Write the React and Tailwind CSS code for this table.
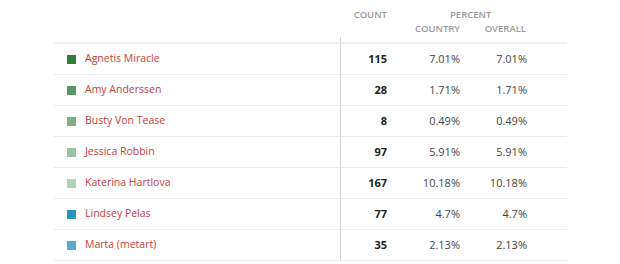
import React from "react";

const rows = [
  { name: "Agnetis Miracle", color: "bg-[#2f7d3b]", count: "115", country: "7.01%", overall: "7.01%" },
  { name: "Amy Anderssen", color: "bg-[#5b9766]", count: "28", country: "1.71%", overall: "1.71%" },
  { name: "Busty Von Tease", color: "bg-[#80b088]", count: "8", country: "0.49%", overall: "0.49%" },
  { name: "Jessica Robbin", color: "bg-[#9cc39f]", count: "97", country: "5.91%", overall: "5.91%" },
  { name: "Katerina Hartlova", color: "bg-[#b3d1b5]", count: "167", country: "10.18%", overall: "10.18%" },
  { name: "Lindsey Pelas", color: "bg-[#2a93bb]", count: "77", country: "4.7%", overall: "4.7%" },
  { name: "Marta (metart)", color: "bg-[#56acca]", count: "35", country: "2.13%", overall: "2.13%" },
];

export default function App() {
  return (
    <div className="w-[620px] h-[264px] bg-white overflow-hidden" style={{ fontFamily: '"Open Sans", sans-serif' }}>
      <div className="ml-[54px] w-[513px]">
        <div className="h-[37px] flex flex-col text-[9.5px] font-semibold text-[#9a9a9a] uppercase leading-none">
          <div className="grid grid-cols-[286px_48px_139px_40px] pt-[10px] h-[24px]">
            <div />
            <div className="text-right pr-[1px]">Count</div>
            <div className="pl-[62px]">Percent</div>
            <div />
          </div>
          <div className="grid grid-cols-[286px_48px_72px_67px_40px]">
            <div />
            <div />
            <div className="text-right">Country</div>
            <div className="text-right pr-[1px]">Overall</div>
            <div />
          </div>
        </div>
        <div className="grid grid-cols-[286px_227px] h-[7px]">
          <div className="border-b-2 border-[#f2f2f2]" />
          <div className="border-l border-l-[#d4d4d4] border-b-2 border-b-[#f2f2f2]" />
        </div>
        {rows.map((r) => (
          <div key={r.name} className="grid grid-cols-[286px_48px_72px_67px_40px] h-[31px] items-stretch text-[11px]">
            <div className="flex items-center pl-[13px] gap-[9px] border-b border-[#ececec]">
              <span className={`w-[9px] h-[9px] ${r.color}`} />
              <span className="text-[#c4403a] text-[10.5px]">{r.name}</span>
            </div>
            <div className="flex items-center justify-end border-l border-l-[#d4d4d4] border-b border-b-[#ececec] font-bold text-[#222] pr-[1px]">{r.count}</div>
            <div className="flex items-center justify-end border-b border-[#ececec] text-[#444]">{r.country}</div>
            <div className="flex items-center justify-end border-b border-[#ececec] text-[#444]">{r.overall}</div>
            <div className="border-b border-[#ececec]" />
          </div>
        ))}
      </div>
    </div>
  );
}
